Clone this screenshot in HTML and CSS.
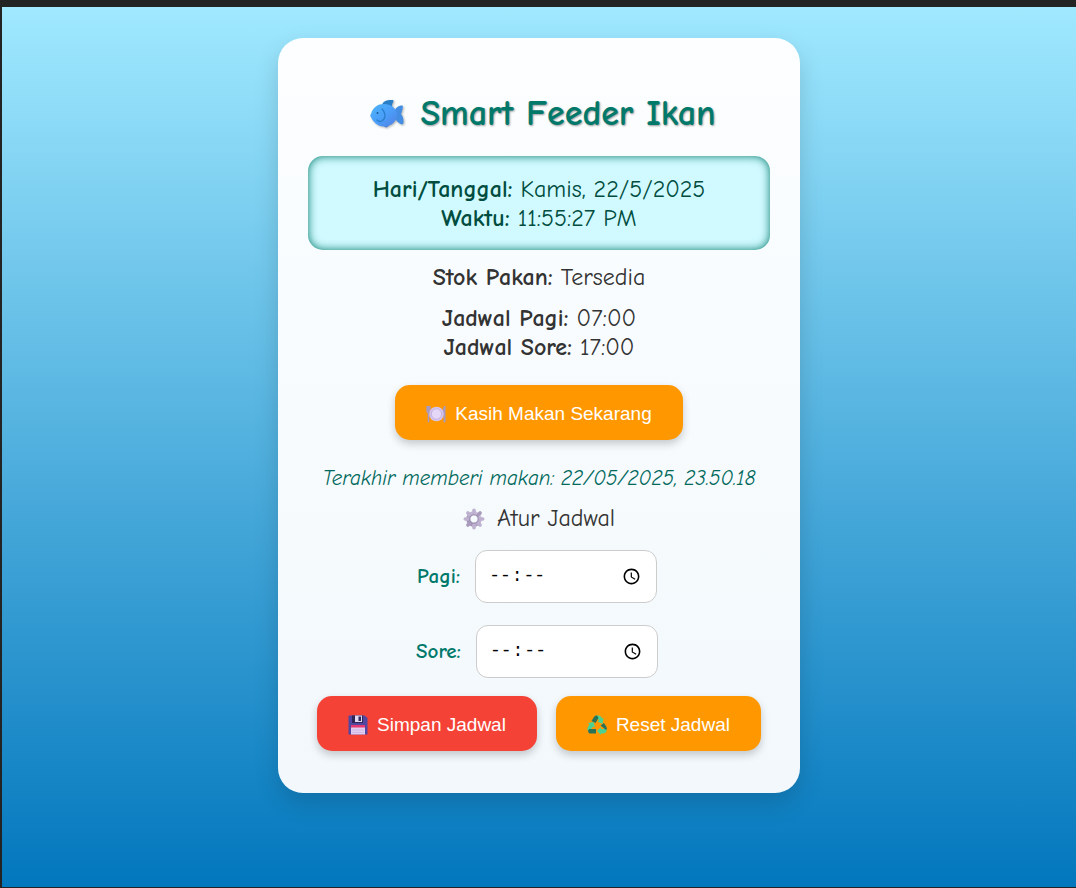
FILE: index.html
```html
<!DOCTYPE html>
<html lang="id">
<head>
<meta charset="utf-8">
<meta name="viewport" content="width=device-width, initial-scale=1">
<title>Smart Feeder Ikan</title>
<link rel="stylesheet" href="styles.css">
</head>
<body>
<main class="page">
  <section class="card">
    <h1 class="title">
      <svg class="fish" viewBox="0 0 34 30" aria-hidden="true">
        <defs>
          <linearGradient id="fishBody" x1="0" y1="0" x2="1" y2="1"><stop offset="0" stop-color="#4eb5fb"/><stop offset=".55" stop-color="#4a9df8"/><stop offset="1" stop-color="#537fe4"/></linearGradient>
        </defs>
        <path d="M12 6C13 2 17 1 21 1h1.500q1.500 0 1 1.500Q22 4 22 8Z" fill="#287fc8"/>
        <path d="M24 14c1-5 4-7 7-7.500 2.500-.3 2 1.500 1.500 3.500-.5 2-.5 3-1.500 5 2 2 2.500 5 2.500 8 0 2-1 3-3 2-3-1.500-6-5-7-8Z" fill="#438ee2"/>
        <path d="M12 25l3 3c1 1 3 0 5-3Z" fill="#477bd0"/>
        <path d="M1 15C3 8 8 5 14 5c7 0 12 4 13 10 0 7-5 12-12 12.500C8 28 3 23 1 18c-1-1-1-2 0-3Z" fill="url(#fishBody)"/>
        <path d="M12 10c4 4 4 9 0 12-2 1-4 0-5-1" fill="none" stroke="#2b7fcc" stroke-width="1.300" stroke-linecap="round"/>
        <circle cx="7.500" cy="14" r="1" fill="#205c92"/>
      </svg>
      <span>Smart Feeder Ikan</span>
    </h1>
    <div class="clock">
      <div><strong>Hari/Tanggal:</strong> Kamis, 22/5/2025</div>
      <div><strong>Waktu:</strong> 11:55:27 PM</div>
    </div>
    <p class="info"><strong>Stok Pakan:</strong> Tersedia</p>
    <div class="info"><strong>Jadwal Pagi:</strong> 07:00<br><strong>Jadwal Sore:</strong> 17:00</div>
    <button class="button feed" type="button">
      <svg class="icon" viewBox="0 0 20 20" aria-hidden="true">
        <path d="M.7 2v5q0 2 1.300 2v9h1V9q1.300 0 1.300-2V2M2.500 2v5" fill="#a79ac0" stroke="#a79ac0" stroke-width=".6"/>
        <path d="M19 2Q16.500 4 17 11h1v7h1Z" fill="#a79ac0" stroke="#a79ac0" stroke-width="1"/>
        <circle cx="10.500" cy="10" r="7.300" fill="#d5c4ed"/>
        <circle cx="10.500" cy="10" r="5.200" fill="#e5d7f7" stroke="#bfa9dd" stroke-width=".8"/>
      </svg>
      <span>Kasih Makan Sekarang</span>
    </button>
    <p class="last">Terakhir memberi makan: 22/05/2025, 23.50.18</p>
    <h2 class="subtitle">
      <svg class="gear" viewBox="0 0 22 22" aria-hidden="true">
        <defs><linearGradient id="gearFill" x1="1" y1="0" x2="0" y2="1"><stop offset="0" stop-color="#d6cde2"/><stop offset=".5" stop-color="#b5a8c8"/><stop offset="1" stop-color="#9a8ab1"/></linearGradient></defs>
        <g fill="none"><circle cx="11" cy="11" r="5.800" stroke-width="4" stroke="url(#gearFill)"/><path d="M11 2.300v3M11 16.700v3M2.300 11h3M16.700 11h3M4.900 4.900 7 7M15 15l2.100 2.100" stroke-width="3.600" stroke-linecap="round" stroke="#bdb1cf"/><path d="M17.100 4.900 15 7M7 15l-2.100 2.100" stroke="#aa9bbc" stroke-width="3.600" stroke-linecap="round"/></g>
        <circle cx="11" cy="11" r="4.200" fill="none" stroke="#8f80a5" stroke-width=".8"/>
      </svg>
      <span>Atur Jadwal</span>
    </h2>
    <form class="schedule">
      <div class="row"><label for="pagi">Pagi:</label><input id="pagi" class="time" type="time"></div>
      <div class="row"><label for="sore">Sore:</label><input id="sore" class="time" type="time"></div>
      <div class="actions">
        <button class="button save" type="button">
          <svg class="icon" viewBox="0 0 20 20" aria-hidden="true">
            <path d="M1 .5h15.500L19.500 3v16.500H.5V1Z" fill="#5147a0"/>
            <path d="M4 .5h11V8H4Z" fill="#302656"/><path d="M7 .5h7V7H7Z" fill="#e4d9f2"/><path d="M10.500 1.500H13V6h-2.500Z" fill="#31285c"/>
            <path d="M3 10h14v9.500H3Z" fill="#e2cef1"/><path d="M3 10h14v2.500H3Z" fill="#e73971"/><path d="M4 15h12M4 17.500h12" stroke="#c4a9df" stroke-width=".6"/>
          </svg>
          <span>Simpan Jadwal</span>
        </button>
        <button class="button reset" type="button">
          <svg class="icon" viewBox="0 0 20 20" aria-hidden="true">
            <path d="M8 .5h3q3 0 4 3l1.500-.5-1 6-5-2.500 1.500-1-2-3Z" fill="#4bd293"/>
            <path d="M4.500 6 7 2Q8 0 10 .5l1.500 2.500L8.500 8Z" fill="#287258"/>
            <path d="M19 12q2 6-3 6.500h-2V20l-4-4 4-4v2h3Z" fill="#4bd293"/>
            <path d="m13.500 10.500 3.500-2.500 2.500 4q.8 2-.5 3Z" fill="#287258"/>
            <path d="M1 16q-1.500-2 .5-5l1-1.500L1 8l5.500-1L8 12.500l-2-1L3.500 15Z" fill="#4bd293"/>
            <path d="M2.500 14H9v4.500H3Q1 18 1 15.500Z" fill="#287258"/>
          </svg>
          <span>Reset Jadwal</span>
        </button>
      </div>
    </form>
  </section>
</main>
</body>
</html>
```
FILE: styles.css
```css
* { box-sizing: border-box; }
body {
  margin: 0;
  min-height: 100vh;
  display: flex;
  border: solid #232323;
  border-width: 7px 0 1px 2px;
  font-family: "Comic Sans MS", "Comic Neue", "Noto Sans", sans-serif;
  font-size: 24px;
  line-height: 29px;
  color: #333;
}
.page {
  flex: 1;
  padding: 31px 16px;
  background: linear-gradient(to bottom, #a0e9ff, #0277bd);
}
.card {
  max-width: 522px;
  margin: 0 auto;
  padding: 53px 30px 42px;
  border-radius: 25px;
  background: linear-gradient(to bottom, #fcfeff, #f2f8fc);
  box-shadow: 0 10px 25px rgba(0, 0, 0, .15);
  text-align: center;
}
.title {
  display: flex;
  justify-content: center;
  align-items: center;
  gap: 16px;
  margin: 0 0 19px;
  padding-left: 8px;
  color: #00796b;
  font-size: 36px;
  line-height: 46px;
  text-shadow: 1px 1px 2px rgba(0, 0, 0, .4);
}
.fish {
  width: 34px;
  height: 30px;
  filter: drop-shadow(1px 1px 1px rgba(0, 0, 0, .3));
}
.clock {
  padding: 19px 18px 17px;
  border-radius: 15px;
  background: #d0faff;
  box-shadow: inset 0 0 10px #00796b;
  color: #004d40;
}
.info { margin: 12px 0; }
.clock + .info { margin-top: 13px; }
.button {
  display: inline-flex;
  align-items: center;
  justify-content: center;
  gap: 9px;
  padding: 16px 31px 14px;
  border: 0;
  border-radius: 15px;
  background: #ff9800;
  box-shadow: 0 4px 8px rgba(0, 0, 0, .2);
  color: #fff;
  font: 19px/25px "Liberation Sans", Arial, sans-serif;
  cursor: pointer;
}
.save { background: #f44336; }
.icon { width: 20px; height: 20px; }
.feed { margin: 11px 0 24px; }
.last {
  margin: 0 0 11px;
  color: #00695c;
  font-size: 21px;
  font-style: italic;
}
.subtitle {
  display: flex;
  justify-content: center;
  align-items: center;
  gap: 12px;
  margin: 0 0 17px;
  font-size: 24px;
  font-weight: 400;
}
.gear { width: 22px; height: 22px; }
.row {
  display: flex;
  justify-content: center;
  align-items: center;
  gap: 15px;
  margin-bottom: 22px;
  padding-right: 4px;
}
.row label {
  color: #00796b;
  font-size: 21px;
  font-weight: 700;
}
.time {
  width: 182px;
  height: 53px;
  padding: 12px;
  border: 1px solid #ccc;
  border-radius: 12px;
  background: #fff;
  color: #000;
  font: 18px "Liberation Mono", monospace;
}
.time::-webkit-datetime-edit-ampm-field { display: none; }
.actions {
  display: flex;
  flex-wrap: wrap;
  justify-content: center;
  gap: 19px;
  margin-top: -4px;
}
```
